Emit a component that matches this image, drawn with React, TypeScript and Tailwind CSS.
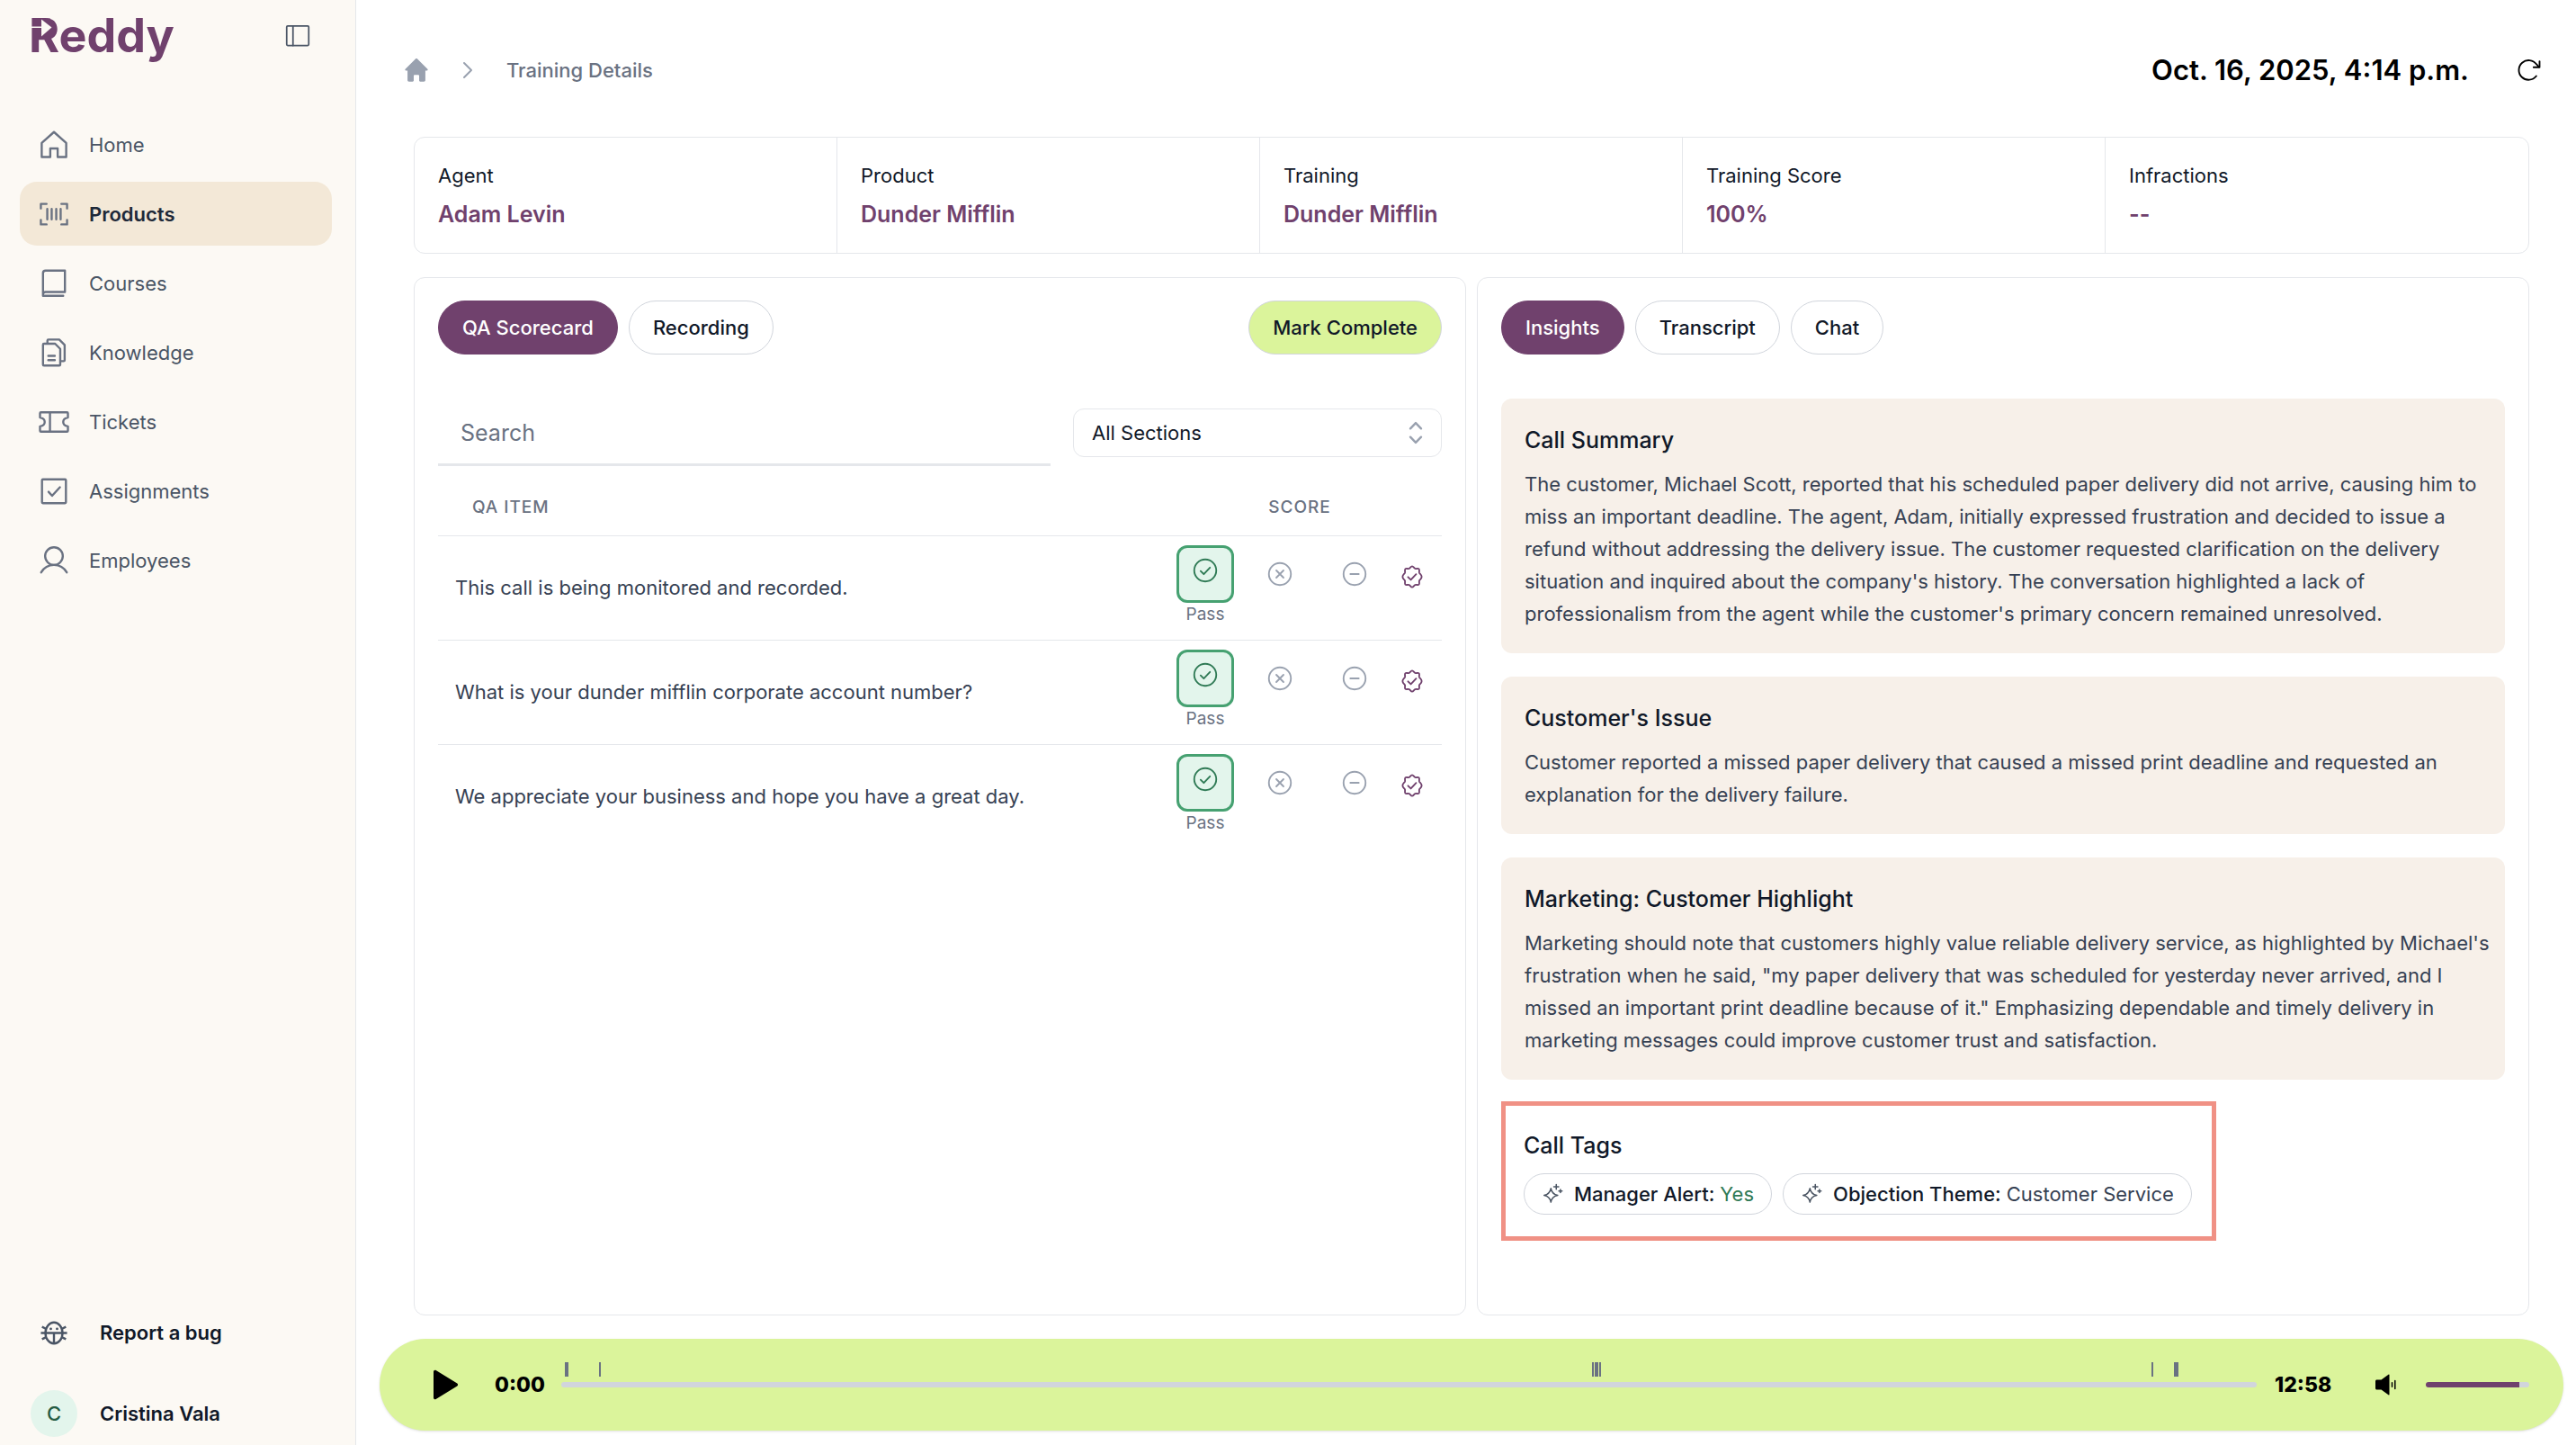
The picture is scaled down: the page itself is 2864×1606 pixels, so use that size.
import React, { useState } from "react";

const iconProps = {
  viewBox: "0 0 24 24",
  fill: "none",
  stroke: "currentColor",
  strokeWidth: "1.5",
  strokeLinecap: "round",
  strokeLinejoin: "round",
} as const;

const HomeIcon = () => (
  <svg className="w-[38px] h-[38px]" {...iconProps}>
    <path d="M3.4 10.7 12 3l8.6 7.7v9.8h-6v-6H9.4v6h-6z" />
  </svg>
);

const ProductsIcon = () => (
  <svg className="w-[38px] h-[38px]" {...iconProps}>
    <path d="M2.8 8V4.8h4M17.2 4.8h4V8M21.2 16v3.2h-4M6.8 19.2h-4V16" />
    <path d="M7.3 8.3v7.4M10.4 8.3v7.4M13.6 8.3v7.4M16.7 8.3v7.4" />
  </svg>
);

const CoursesIcon = () => (
  <svg className="w-[38px] h-[38px]" {...iconProps}>
    <path d="M4.3 20.7V4.8a1.8 1.8 0 0 1 1.8-1.8h13.6v15H6.1c-1 0-1.8.8-1.8 1.8v.9h14.2" />
  </svg>
);

const KnowledgeIcon = () => (
  <svg className="w-[38px] h-[38px]" {...iconProps}>
    <path d="M4.3 6.4c0-.4.3-.7.7-.7h7.8l3.6 3.6v11c0 .4-.3.7-.7.7H5a.7.7 0 0 1-.7-.7z" />
    <path d="M7.4 5.5V3.4c0-.4.3-.6.7-.6h7.6l3.8 3.8v10.6c0 .4-.3.7-.7.7h-2.2" />
    <path d="M8 14.2h4.6M8 17.2h4.6" />
  </svg>
);

const TicketsIcon = () => (
  <svg className="w-[38px] h-[38px]" {...iconProps}>
    <path d="M2.2 5.9c0-.4.3-.7.7-.7h18.2c.4 0 .7.3.7.7v3c-2 .3-3.3 1.5-3.3 3.1s1.3 2.8 3.3 3.1v3c0 .4-.3.7-.7.7H2.9a.7.7 0 0 1-.7-.7v-3c2-.3 3.3-1.5 3.3-3.1S4.2 9.2 2.2 8.9z" />
    <path d="M9.2 5.2v13.6" />
  </svg>
);

const AssignmentsIcon = () => (
  <svg className="w-[38px] h-[38px]" {...iconProps}>
    <rect x="3.6" y="3.6" width="16.8" height="16.8" rx="0.6" />
    <path d="m8.2 12.4 2.5 2.8 5.5-6" />
  </svg>
);

const EmployeesIcon = () => (
  <svg className="w-[38px] h-[38px]" {...iconProps}>
    <circle cx="12" cy="8.9" r="6.2" />
    <path d="M3 20.3c1.9-3.2 5.2-5.2 9-5.2s7.1 2 9 5.2" />
  </svg>
);

const BugIcon = () => (
  <svg className="w-[38px] h-[38px]" {...iconProps} strokeLinecap="butt">
    <ellipse cx="12" cy="12.3" rx="6" ry="7.4" />
    <path d="M2.8 12.3h18.4M12 12.3v7.4M6.3 9.3 3.6 8M17.7 9.3 20.4 8M6.3 15.4l-2.7 1.3M17.7 15.4l2.7 1.3" />
    <circle cx="9.8" cy="9.4" r="0.9" fill="currentColor" stroke="none" />
    <circle cx="14.2" cy="9.4" r="0.9" fill="currentColor" stroke="none" />
  </svg>
);

const SparkleIcon = () => (
  <svg className="w-[26px] h-[26px] text-[#4b5563]" {...iconProps} strokeWidth="1.4">
    <path d="M9.5 6.3c.8 4.3 2.7 6.2 7 7-4.3.8-6.2 2.7-7 7-.8-4.3-2.7-6.2-7-7 4.3-.8 6.2-2.7 7-7z" />
    <path d="M15 2.2v5M12.5 4.7h5M19.3 7.3v3.4M17.6 9h3.4" />
  </svg>
);

const CircleCheckIcon = () => (
  <svg className="w-[28px] h-[28px]" {...iconProps} strokeWidth="1.6">
    <circle cx="12" cy="12" r="10.5" />
    <path d="m7.6 12.6 3 3 5.9-6.3" />
  </svg>
);

const CircleXIcon = () => (
  <svg className="w-[28px] h-[28px]" {...iconProps} strokeWidth="1.6">
    <circle cx="12" cy="12" r="10.5" />
    <path d="m8.6 8.6 6.8 6.8M15.4 8.6l-6.8 6.8" />
  </svg>
);

const CircleMinusIcon = () => (
  <svg className="w-[28px] h-[28px]" {...iconProps} strokeWidth="1.6">
    <circle cx="12" cy="12" r="10.5" />
    <path d="M8 12h8" />
  </svg>
);

const SealCheckIcon = () => (
  <svg className="w-[26px] h-[26px]" {...iconProps} strokeWidth="1.7">
    <path d="M12 1.2c1.3 0 1.9 1.9 3.1 2.4 1.3.5 3-.5 3.9.4s-.1 2.6.4 3.9c.5 1.2 2.4 1.8 2.4 4.1s-1.9 2.9-2.4 4.1c-.5 1.3.5 3-.4 3.9s-2.6-.1-3.9.4c-1.2.5-1.8 2.4-3.1 2.4s-1.9-1.9-3.1-2.4c-1.3-.5-3 .5-3.9-.4s.1-2.6-.4-3.9c-.5-1.2-2.4-1.8-2.4-4.1s1.9-2.9 2.4-4.1c.5-1.3-.5-3 .4-3.9s2.6.1 3.9-.4c1.2-.5 1.8-2.4 3.1-2.4z" />
    <path d="m7.8 12.3 2.9 2.9 5.4-5.8" />
  </svg>
);

const Logo = () => (
  <svg className="w-[176px] h-[76px]" viewBox="0 -10 176 76" role="img" aria-label="Reddy">
    <text x="0" y="46" className="text-[52px] font-bold" fill="#70416d">
      Reddy
    </text>
    {/* play arrow cut out of the R */}
    <path d="M10 8.5h14v20H10z" fill="#70416d" />
    <path d="M14 9.5 25.5 18.5 14 28.5z" fill="#fcf9f4" />
    <path d="M2 17.5h13V19H2z" fill="#fcf9f4" />
  </svg>
);

const navItems = [
  { label: "Home", icon: HomeIcon },
  { label: "Products", icon: ProductsIcon },
  { label: "Courses", icon: CoursesIcon },
  { label: "Knowledge", icon: KnowledgeIcon },
  { label: "Tickets", icon: TicketsIcon },
  { label: "Assignments", icon: AssignmentsIcon },
  { label: "Employees", icon: EmployeesIcon },
];

const stats = [
  { label: "Agent", value: "Adam Levin" },
  { label: "Product", value: "Dunder Mifflin" },
  { label: "Training", value: "Dunder Mifflin" },
  { label: "Training Score", value: "100%" },
  { label: "Infractions", value: "--" },
];

const qaItems = [
  "This call is being monitored and recorded.",
  "What is your dunder mifflin corporate account number?",
  "We appreciate your business and hope you have a great day.",
];

const insights = [
  {
    title: "Call Summary",
    text: "The customer, Michael Scott, reported that his scheduled paper delivery did not arrive, causing him to miss an important deadline. The agent, Adam, initially expressed frustration and decided to issue a refund without addressing the delivery issue. The customer requested clarification on the delivery situation and inquired about the company's history. The conversation highlighted a lack of professionalism from the agent while the customer's primary concern remained unresolved.",
  },
  {
    title: "Customer's Issue",
    text: "Customer reported a missed paper delivery that caused a missed print deadline and requested an explanation for the delivery failure.",
  },
  {
    title: "Marketing: Customer Highlight",
    text: "Marketing should note that customers highly value reliable delivery service, as highlighted by Michael's frustration when he said, \"my paper delivery that was scheduled for yesterday never arrived, and I missed an important print deadline because of it.\" Emphasizing dependable and timely delivery in marketing messages could improve customer trust and satisfaction.",
  },
];

// position and width of each marker, in percent of the recording
const markers = [
  { left: 0.21, width: 0.2 },
  { left: 2.23, width: 0.1 },
  { left: 60.8, width: 0.1 },
  { left: 60.96, width: 0.21 },
  { left: 61.22, width: 0.1 },
  { left: 93.8, width: 0.1 },
  { left: 95.14, width: 0.26 },
];

function Pill({ active, onClick, children }: { active: boolean; onClick: () => void; children: React.ReactNode }) {
  return (
    <button
      onClick={onClick}
      className={
        active
          ? "h-[60px] px-[26px] rounded-full border border-[#70416d] bg-[#70416d] text-white font-medium"
          : "h-[60px] px-[26px] rounded-full border border-gray-300 bg-white text-gray-900 font-medium"
      }
    >
      {children}
    </button>
  );
}

function Sidebar() {
  return (
    <aside className="w-[396px] shrink-0 flex flex-col bg-[#fcf9f4] border-r border-gray-200">
      <div className="h-[125px] pl-8 pr-[50px] pt-[2px] flex items-start justify-between">
        <Logo />
        <button aria-label="Toggle sidebar" className="mt-6 text-gray-600">
          <svg className="w-[28px] h-[28px]" {...iconProps}>
            <rect x="1.5" y="2.5" width="21" height="18.5" rx="1" />
            <path d="M7.5 2.5V21" />
          </svg>
        </button>
      </div>
      <nav className="pl-[22px] pr-[26px] flex flex-col gap-[6px]">
        {navItems.map(({ label, icon: Icon }) => (
          <a
            key={label}
            href="#"
            className={
              label === "Products"
                ? "h-[71px] pl-[19px] flex items-center gap-5 rounded-[19px] bg-[#f3e8d7] text-gray-800 font-semibold"
                : "h-[71px] pl-[19px] flex items-center gap-5 rounded-[19px] text-gray-600"
            }
          >
            <span className="text-gray-500">
              <Icon />
            </span>
            {label}
          </a>
        ))}
      </nav>
      <div className="mt-auto pl-[34px] pb-[9px] flex flex-col gap-[45px] font-semibold text-gray-900">
        <a href="#" className="flex items-center gap-[25px]">
          <span className="w-[52px] flex justify-center text-gray-600">
            <BugIcon />
          </span>
          Report a bug
        </a>
        <a href="#" className="flex items-center gap-[25px]">
          <span className="w-[52px] h-[52px] rounded-full bg-[#e3f5ec] text-[#265c44] flex items-center justify-center font-medium">
            C
          </span>
          Cristina Vala
        </a>
      </div>
    </aside>
  );
}

function Header() {
  return (
    <header className="h-[152px] pt-1 pl-[53px] pr-[39px] flex items-center justify-between">
      <nav aria-label="Breadcrumb" className="flex items-center text-gray-500 font-medium">
        <a href="#" aria-label="Home" className="text-gray-400">
          <svg className="w-[28px] h-[28px]" viewBox="0 0 24 24" fill="currentColor">
            <path d="M12 .8c.3 0 .5.1.7.3L22.6 11c.5.5.2 1.4-.6 1.4h-1.5v9.1c0 .8-.6 1.4-1.4 1.4h-3.5c-.6 0-1-.4-1-1v-4.4c0-.6-.4-1-1-1h-3.2c-.6 0-1 .4-1 1v4.4c0 .6-.4 1-1 1H4.9c-.8 0-1.4-.6-1.4-1.4v-9.1H2c-.8 0-1.1-.9-.6-1.4L11.3 1.1c.2-.2.4-.3.7-.3z" />
          </svg>
        </a>
        <svg className="w-[32px] h-[32px] mx-[27px] text-gray-400" {...iconProps}>
          <path d="m9 6 6 6-6 6" />
        </svg>
        Training Details
      </nav>
      <div className="flex items-center gap-[52px]">
        <h1 className="text-[31px] leading-[40px] font-semibold text-black">Oct. 16, 2025, 4:14 p.m.</h1>
        <button aria-label="Refresh" className="text-black">
          <svg className="w-[28px] h-[28px]" {...iconProps} strokeWidth="1.6">
            <path d="M19.6 17.6a9.3 9.3 0 1 1 .2-11.2l2.2 2.4" />
            <path d="M22.7 3.5v5.7H17" />
          </svg>
        </button>
      </div>
    </header>
  );
}

function ScorecardPanel() {
  const [tab, setTab] = useState("QA Scorecard");

  return (
    <section className="min-w-0 px-[26px] py-[25px] border border-gray-200 rounded-xl">
      <div className="flex items-center gap-3">
        {["QA Scorecard", "Recording"].map((name) => (
          <Pill key={name} active={tab === name} onClick={() => setTab(name)}>
            {name}
          </Pill>
        ))}
        <button className="ml-auto h-[60px] px-[26px] rounded-full border border-gray-300 bg-[#dbf49b] text-gray-900 font-medium">
          Mark Complete
        </button>
      </div>

      <div className="mt-[49px] flex items-center gap-[25px]">
        <input
          type="text"
          aria-label="Search"
          placeholder="Search"
          className="flex-1 h-[75px] px-[25px] pt-1 text-[25px] border-b-3 border-gray-200 placeholder:text-gray-500 outline-none"
        />
        <div className="relative w-[410px]">
          <select
            aria-label="Section"
            className="w-full h-[54px] px-5 appearance-none rounded-xl border border-gray-200 bg-white text-gray-900"
          >
            <option>All Sections</option>
          </select>
          <svg
            className="absolute right-[13px] top-[11px] w-[32px] h-[32px] text-gray-400 pointer-events-none"
            {...iconProps}
            strokeWidth="1.8"
          >
            <path d="M7.5 8.5 12 3.8l4.5 4.7M7.5 15.5l4.5 4.7 4.5-4.7" />
          </svg>
        </div>
      </div>

      <table className="mt-3 w-full">
        <thead>
          <tr className="h-[65px] border-b border-gray-200 text-[19px] text-gray-500 tracking-wider">
            <th className="pl-[38px] pt-[3px] text-left font-medium">QA ITEM</th>
            <th className="w-[316px] pt-[3px] text-center font-medium">SCORE</th>
          </tr>
        </thead>
        <tbody>
          {qaItems.map((item) => (
            <tr key={item} className="h-[116px] border-b border-gray-200 last:border-b-0">
              <td className="pl-[19px] text-gray-700">{item}</td>
              <td className="pl-[21px] pt-[10px] align-top">
                <div className="flex items-start gap-[19px] text-gray-400">
                  <div className="flex flex-col items-center">
                    <button
                      aria-label="Pass"
                      className="w-[64px] h-[64px] pb-[7px] flex items-center justify-center rounded-xl border-3 border-[#46a171] bg-[#e3f5ec] text-[#2f7a55]"
                    >
                      <CircleCheckIcon />
                    </button>
                    <span className="text-[19px] leading-[26px] text-gray-500">Pass</span>
                  </div>
                  <button aria-label="Fail" className="w-[64px] h-[64px] flex items-center justify-center">
                    <CircleXIcon />
                  </button>
                  <button aria-label="Not applicable" className="w-[64px] h-[64px] flex items-center justify-center">
                    <CircleMinusIcon />
                  </button>
                  <button aria-label="Verify" className="h-[70px] flex items-center text-[#70416d]">
                    <SealCheckIcon />
                  </button>
                </div>
              </td>
            </tr>
          ))}
        </tbody>
      </table>
    </section>
  );
}

function InsightsPanel() {
  const [tab, setTab] = useState("Insights");

  return (
    <section className="min-w-0 px-[26px] py-[25px] border border-gray-200 rounded-xl">
      <div className="flex items-center gap-3">
        {["Insights", "Transcript", "Chat"].map((name) => (
          <Pill key={name} active={tab === name} onClick={() => setTab(name)}>
            {name}
          </Pill>
        ))}
      </div>

      <div className="mt-[49px] flex flex-col gap-[26px]">
        {insights.map(({ title, text }) => (
          <article key={title} className="py-[26px] pl-[26px] pr-[14px] rounded-xl bg-[#f7f0e9]">
            <h2 className="text-[25px] leading-[40px] font-medium text-gray-900">{title}</h2>
            <p className="mt-[11px] leading-[36px] text-gray-700">{text}</p>
          </article>
        ))}
      </div>

      <div className="mt-6 w-fit py-6 pl-5 pr-[22px] border-5 border-[#f09185]">
        <h2 className="text-[25px] leading-[40px] font-medium text-gray-900">Call Tags</h2>
        <div className="mt-[11px] flex gap-3">
          <span className="h-[46px] px-[19px] flex items-center rounded-full border border-gray-300 text-gray-900">
            <SparkleIcon />
            <span className="ml-[10px] font-medium">Manager Alert:</span>
            <span className="ml-[6px] text-[#2f7a55]">Yes</span>
          </span>
          <span className="h-[46px] px-[19px] flex items-center rounded-full border border-gray-300 text-gray-900">
            <SparkleIcon />
            <span className="ml-[10px] font-medium">Objection Theme:</span>
            <span className="ml-[6px] text-gray-700">Customer Service</span>
          </span>
        </div>
      </div>
    </section>
  );
}

function Player() {
  return (
    <div className="mt-[26px] mb-4 ml-[26px] mr-[14px] h-[102px] pl-[58px] pr-[38px] flex items-center rounded-full bg-[#dbf49b] shadow-sm text-black font-extrabold">
      <button aria-label="Play" className="w-[32px]">
        <svg className="w-[32px] h-[36px]" viewBox="0 0 32 36" fill="currentColor">
          <path d="M2 3.5c0-1.4 1.5-2.2 2.7-1.5l23.6 14.5c1.1.7 1.1 2.3 0 3L4.7 34c-1.2.7-2.7-.1-2.7-1.5z" />
        </svg>
      </button>
      <span className="ml-[38px] w-[54px] text-[23px]">0:00</span>
      <div className="relative ml-5 flex-1 flex">
        {markers.map(({ left, width }) => (
          <span
            key={left}
            className="absolute -top-[22px] h-4 bg-gray-500"
            style={{ left: `${left}%`, width: `${width}%` }}
          />
        ))}
        <input
          type="range"
          aria-label="Seek"
          defaultValue={0}
          className="w-full h-[6px] appearance-none rounded-full bg-gray-300 [&::-webkit-slider-thumb]:appearance-none"
        />
      </div>
      <span className="ml-5 w-[68px] text-[23px]">12:58</span>
      <button aria-label="Mute" className="ml-[44px]">
        <svg className="w-[24px] h-[24px]" viewBox="0 0 24 24" fill="currentColor">
          <path d="M1.5 6.5h5L14.8.6c.3-.2.7 0 .7.4v22c0 .4-.4.6-.7.4L6.5 17.5h-5c-.8 0-1.5-.7-1.5-1.5V8c0-.8.7-1.5 1.5-1.5z" />
          <path d="M18.5 9.7v4.6M21.8 7.5v9" stroke="currentColor" strokeWidth="1.5" strokeLinecap="round" />
        </svg>
      </button>
      <input
        type="range"
        aria-label="Volume"
        defaultValue={90}
        className="ml-8 w-[115px] h-[6px] appearance-none rounded-full bg-[linear-gradient(to_right,#70416d_90%,#d1d5db_90%)] [&::-webkit-slider-thumb]:appearance-none"
      />
    </div>
  );
}

export default function App() {
  return (
    <div className="min-h-screen flex bg-white font-[Inter,'Liberation_Sans',sans-serif] text-[22px] leading-[32px]">
      <Sidebar />
      <main className="flex-1 min-w-0 flex flex-col">
        <Header />
        <dl className="ml-[64px] mr-[52px] grid grid-cols-5 border border-gray-200 rounded-xl divide-x divide-gray-200">
          {stats.map(({ label, value }) => (
            <div key={label} className="px-[26px] pt-[26px] pb-6">
              <dt className="text-gray-900">{label}</dt>
              <dd className="mt-2 text-[25px] leading-[38px] font-semibold text-[#70416d]">{value}</dd>
            </div>
          ))}
        </dl>
        <div className="flex-1 mt-[26px] ml-[64px] mr-[52px] grid grid-cols-2 gap-3">
          <ScorecardPanel />
          <InsightsPanel />
        </div>
        <Player />
      </main>
    </div>
  );
}
